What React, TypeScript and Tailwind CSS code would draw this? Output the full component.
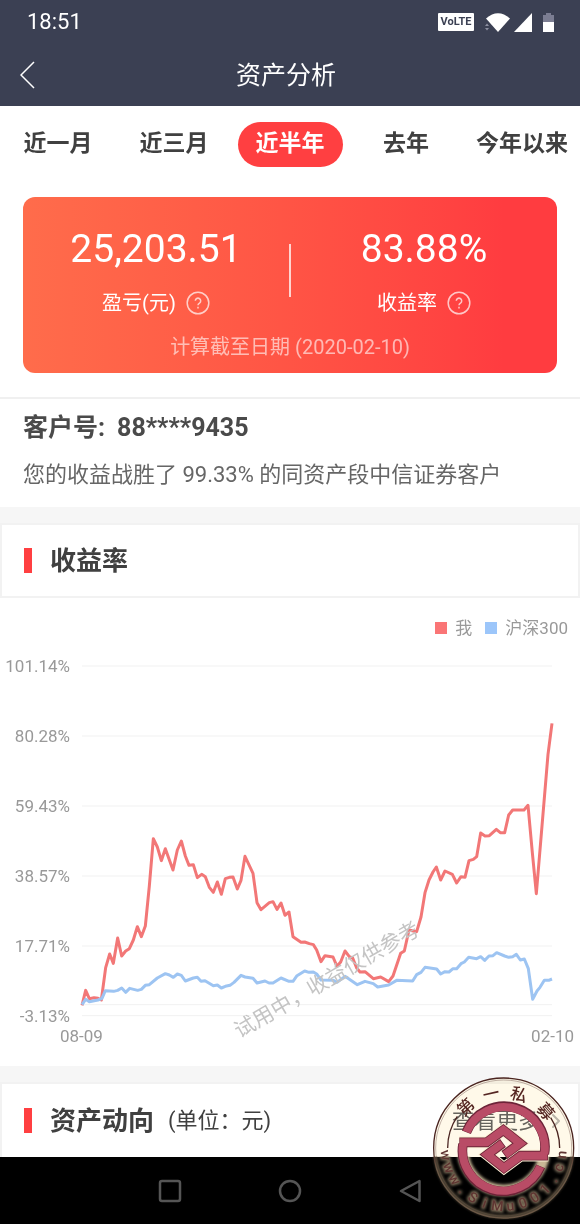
import { ChevronRight } from "lucide-react";

const ranges = ["近一月", "近三月", "近半年", "去年", "今年以来"];

const summary = [
  { value: "25,203.51", label: "盈亏(元)" },
  { value: "83.88%", label: "收益率" },
];

const yLabels = ["101.14%", "80.28%", "59.43%", "38.57%", "17.71%", "-3.13%"];
const gridLines = [0, 210, 420, 630, 840, 1016, 1049];

// --- CHART SERIES (x 36..1446, y grows downwards) ---
const mine =
  "36,918 47,873 58,898 72,895 84,897 94,902 107,805 119,764 130,792 143,716 155,770 167,755 178,748 190,722 202,682 214,712 226,680 238,560 250,418 262,443 274,484 286,448 309,512 322,452 334,425 346,470 357,498 370,496 382,535 395,525 406,532 418,564 430,579 442,548 454,585 466,538 478,534 489,533 502,569 513,543 525,471 549,522 561,610 573,631 598,610 609,607 621,630 633,611 645,648 657,638 669,712 693,729 704,728 718,733 730,736 740,752 753,787 765,769 789,773 801,801 812,788 825,755 838,772 848,776 860,806 870,818 885,817 910,838 932,833 956,847 969,830 992,762 1003,755 1017,692 1040,697 1053,653 1065,580 1077,542 1089,518 1099,503 1112,542 1125,515 1147,525 1160,551 1173,532 1185,534 1197,484 1210,480 1220,472 1232,401 1245,410 1258,409 1279,390 1291,400 1304,400 1316,347 1328,332 1362,332 1374,318 1387,460 1399,583 1434,165 1446,72";
const csi300 =
  "36,916 47,900 58,907 84,902 96,897 106,874 131,876 143,873 155,866 167,879 179,867 203,873 214,870 226,858 238,856 262,836 286,823 298,827 310,834 322,824 334,828 346,845 370,836 382,834 393,846 405,844 430,859 442,857 454,866 466,861 480,858 492,849 513,828 525,833 549,837 561,851 585,845 597,851 609,851 633,836 657,846 669,846 681,829 704,815 717,819 730,818 740,824 753,842 790,843 801,849 825,831 862,856 885,846 910,853 923,863 956,857 980,843 1028,845 1040,826 1053,819 1065,804 1100,809 1112,824 1125,817 1137,818 1149,808 1160,808 1173,793 1183,788 1196,774 1220,778 1232,772 1244,783 1257,770 1269,769 1280,760 1304,770 1316,774 1328,772 1339,765 1351,782 1363,779 1375,808 1388,900 1401,875 1410,864 1423,843 1436,843 1446,839";

const sealTop = [
  { char: "第", angle: -43 },
  { char: "一", angle: -13 },
  { char: "私", angle: 16 },
  { char: "募", angle: 49 },
];
const sealBottom = "www.SiMu001.cn".split("");

function StatusIcons() {
  return (
    <div className="flex items-center">
      <span className="flex h-[18px] w-9 items-center justify-center rounded-[1px] bg-white text-[11px] leading-3 font-bold text-[#3b4053]">
        VoLTE
      </span>
      <svg className="ml-[10px] h-[19px] w-[26px]" viewBox="0 0 26 19" aria-hidden="true">
        <path d="M2 5.500Q14 -5 26 5.500L14 19Z" fill="#fff" />
        <path d="M1 13l2-2.500 2 2.500zM1 15l2 2.500 2-2.500z" fill="#8c8fa0" />
      </svg>
      <svg className="ml-1 h-[19px] w-[18px]" viewBox="0 0 18 19" aria-hidden="true">
        <path d="M18 0V19H0Z" fill="#fff" />
      </svg>
      <svg className="ml-[11px] h-[19px] w-[11px]" viewBox="0 0 11 19" aria-hidden="true">
        <path d="M3 0h5v2h3v7H0V2h3z" fill="#7b7d92" />
        <path d="M0 9h11v10H0z" fill="#fff" />
      </svg>
    </div>
  );
}

function HelpButton({ label }: { label: string }) {
  return (
    <button type="button" aria-label={label} className="h-6 w-6 opacity-70">
      <svg viewBox="0 0 24 24" fill="none" stroke="#fff" strokeWidth="1.500" className="h-6 w-6">
        <circle cx="12" cy="12" r="10.800" />
        <path d="M9.300 9.800a2.700 2.700 0 1 1 4.200 2.300c-1 .6-1.500 1.100-1.500 2.100" />
        <path d="M12 15.800v1.700" />
      </svg>
    </button>
  );
}

function Seal() {
  return (
    <div className="pointer-events-none absolute right-1 bottom-1 h-36 w-36">
      <svg viewBox="36 34 432 432" className="absolute inset-0 h-36 w-36 mix-blend-multiply" aria-hidden="true">
        <circle cx="251" cy="250" r="211" fill="#fff9e9" />
      </svg>
      <svg viewBox="36 34 432 432" className="absolute inset-0 h-36 w-36" aria-hidden="true">
        <defs>
          <filter id="glow" x="-20%" y="-20%" width="140%" height="140%">
            <feGaussianBlur stdDeviation="4" />
          </filter>
          <clipPath id="lower">
            <rect x="36" y="275" width="432" height="191" />
          </clipPath>
          <linearGradient id="rim" x1="0" y1="0" x2="0" y2="1">
            <stop offset="0.5" stopColor="#4a2420" />
            <stop offset="0.65" stopColor="#6b5846" />
          </linearGradient>
        </defs>

        {/* soft halo over the dark bar */}
        <g clipPath="url(#lower)">
          <g fill="none" filter="url(#glow)">
            <circle cx="251" cy="250" r="206" stroke="#75654f" strokeWidth="8" />
            <circle cx="251" cy="255" r="122" stroke="#c9b896" strokeWidth="34" />
          </g>
          <g fill="#8d7c64" stroke="#8d7c64" strokeWidth="8" textAnchor="middle" filter="url(#glow)">
            {sealBottom.map((char, i) => (
              <text key={i} x="251" y="439" fontSize="42" transform={`rotate(${83 - i * 12.8} 251 250)`}>
                {char}
              </text>
            ))}
          </g>
        </g>

        <g fill="none" stroke="url(#rim)">
          <circle cx="251" cy="250" r="210" strokeWidth="4" />
          <circle cx="251" cy="250" r="204" strokeWidth="1" />
        </g>
        <g fill="none" stroke="#4a2420" strokeWidth="4">
          <path d="M83 250A168 168 0 0 1 112 155" />
          <path d="M419 250A168 168 0 0 0 392 159" />
        </g>

        {/* ring and knot */}
        <g fill="none" strokeLinejoin="miter">
          <g stroke="#fbf0d4" strokeWidth="35">
            <path d="M117 233H200L250 196L300 236L253 271" />
            <path d="M385 273H302L252 310L202 270L249 235" />
          </g>
          <g stroke="#6d2438" strokeWidth="29">
            <path d="M139 203A122 122 0 0 1 373 268" />
            <path d="M129 238A122 122 0 0 0 362 305" />
            <path d="M118 233H200L250 196L300 236L253 271" />
            <path d="M384 273H302L252 310L202 270L249 235" />
          </g>
          <g stroke="#b94c66" strokeWidth="24">
            <path d="M140 202A122 122 0 0 1 373 268" />
            <path d="M129 238A122 122 0 0 0 361 306" />
            <path d="M120 233H200L250 196L300 236L255 270" />
            <path d="M382 273H302L252 310L202 270L247 236" />
          </g>
        </g>

        <g fill="#552622" textAnchor="middle">
          {sealTop.map((item) => (
            <text key={item.char} x="251" y="101" fontSize="50" fontWeight="500" transform={`rotate(${item.angle} 251 250)`}>
              {item.char}
            </text>
          ))}
        </g>
        <g fill="#5f3532" textAnchor="middle">
          {sealBottom.map((char, i) => (
            <text key={i} x="251" y="439" fontSize="42" fontWeight="500" transform={`rotate(${83 - i * 12.8} 251 250)`}>
              {char}
            </text>
          ))}
        </g>
      </svg>
    </div>
  );
}

export default function App() {
  return (
    <div
      lang="zh-CN"
      className="relative min-h-screen overflow-hidden bg-white font-['Roboto','Noto_Sans_CJK_SC',sans-serif] text-[#404040]"
    >
      {/* HEADER */}
      <header className="bg-[#3b4053] text-white">
        <div className="flex h-11 items-center justify-between pr-[26px] pl-[27px]">
          <span className="text-[22px] leading-6">18:51</span>
          <StatusIcons />
        </div>
        <div className="grid h-[62px] grid-cols-[1fr_auto_1fr] items-center pr-7 pl-5">
          <button type="button" aria-label="返回" className="w-4">
            <svg viewBox="0 0 16 28" fill="none" stroke="#fff" strokeWidth="1.500" className="h-7 w-4">
              <path d="M14 1L1 14l13 13" />
            </svg>
          </button>
          <h1 className="pt-[2px] text-[25px] leading-8 font-normal">资产分析</h1>
        </div>
      </header>

      {/* RANGE TABS */}
      <nav className="grid grid-cols-5 justify-items-center pt-4">
        {ranges.map((range) => (
          <button
            key={range}
            type="button"
            className={
              range === "近半年"
                ? "h-[45px] w-[105px] rounded-full bg-[#ff3f41] text-[23px] font-bold whitespace-nowrap text-white"
                : "h-[45px] w-[105px] text-[23px] font-bold whitespace-nowrap"
            }
          >
            {range}
          </button>
        ))}
      </nav>

      {/* SUMMARY CARD */}
      <section className="mx-[23px] mt-[30px] rounded-xl bg-linear-to-r from-[#ff6c4b] to-[#ff3c40] to-90% pt-7 pb-[14px] text-white">
        <div className="grid grid-cols-[1fr_2px_1fr]">
          {summary.map((item, i) => (
            <div key={item.label} className={i === 0 ? "order-1 text-center" : "order-3 text-center"}>
              <p className="text-[39px] leading-[48px]">{item.value}</p>
              <div className="mt-[18px] flex items-center justify-center gap-[10px]">
                <span className="text-[20px] leading-6">{item.label}</span>
                <HelpButton label={item.label + "说明"} />
              </div>
            </div>
          ))}
          <span className="order-2 h-[53px] self-center bg-white/75" />
        </div>
        <p className="mt-5 text-center text-[20px] leading-6 text-white/60">计算截至日期 (2020-02-10)</p>
      </section>

      {/* CLIENT */}
      <section className="mt-6 border-t-2 border-[#f0f0f0] px-[23px] pt-[13px] pb-[17px]">
        <p className="flex gap-3 text-[25px] leading-8 font-bold text-[#4a4a4a]">
          <span>客户号:</span>
          <span>88****9435</span>
        </p>
        <p className="mt-4 text-[22px] leading-[30px] whitespace-nowrap text-[#666]">
          您的收益战胜了 99.33% 的同资产段中信证券客户
        </p>
      </section>

      <div className="h-4 bg-[#f6f6f6]" />

      {/* YIELD */}
      <section>
        <div className="flex h-[75px] items-center gap-[18px] border-2 border-[#f2f2f2] px-[22px]">
          <span className="h-[25px] w-2 bg-[#ff3f41]" />
          <h2 className="text-[26px] leading-8 font-bold">收益率</h2>
        </div>

        <div className="flex items-center justify-end pt-5 pr-3 text-[17px] leading-5 text-[#999]">
          <span className="mr-2 h-3 w-3 bg-[#fa7576]" />
          <span className="mr-[13px]">我</span>
          <span className="mr-2 h-3 w-3 bg-[#9cc6fa]" />
          <span>沪深300</span>
        </div>

        <div className="relative mt-[18px] flex gap-3 pr-7">
          <div className="flex h-[370px] w-[70px] shrink-0 flex-col justify-between text-right text-[17px] leading-5 text-[#999]">
            {yLabels.map((label) => (
              <span key={label}>{label}</span>
            ))}
          </div>
          <div className="flex-1 py-[10px]">
            <svg viewBox="36 -100 1410 1050" preserveAspectRatio="none" className="h-[350px] w-full overflow-visible">
              {gridLines.map((y) => (
                <line key={y} x1="36" x2="1446" y1={y - 100} y2={y - 100} stroke="#f1f1f1" vectorEffect="non-scaling-stroke" />
              ))}
              <g fill="none" strokeWidth="3" strokeLinejoin="round">
                <polyline points={mine} stroke="#f27777" vectorEffect="non-scaling-stroke" />
                <polyline points={csi300} stroke="#9dc4f2" vectorEffect="non-scaling-stroke" />
              </g>
            </svg>
          </div>
          {/* watermark */}
          <span className="absolute top-[312px] left-[221px] w-[212px] -rotate-30 text-center text-[21px] leading-6 whitespace-nowrap text-[#c4c4c4]">
            试用中，收益仅供参考
          </span>
        </div>
        <div className="flex justify-between pr-[6px] pb-5 pl-[60px] text-[17px] leading-5 text-[#999]">
          <span>08-09</span>
          <span>02-10</span>
        </div>
      </section>

      <div className="h-4 bg-[#f6f6f6]" />

      {/* ASSET TREND */}
      <section className="flex h-[75px] items-center border-2 border-b-0 border-[#f2f2f2] pr-[10px] pl-[22px]">
        <span className="mr-[18px] h-[25px] w-2 bg-[#ff3f41]" />
        <h2 className="mr-[14px] text-[26px] leading-8 font-bold">资产动向</h2>
        <span className="text-[22px] leading-8">(单位：元)</span>
        <a href="#" className="ml-auto flex items-center gap-1 text-[22px] leading-8 text-[#666]">
          查看更多
          <ChevronRight className="h-6 w-6 text-[#bbb]" strokeWidth={2} />
        </a>
      </section>

      {/* SYSTEM BAR */}
      <footer className="flex h-[67px] items-center justify-center gap-24 bg-black">
        <button type="button" aria-label="最近任务">
          <svg viewBox="0 0 24 24" fill="none" stroke="#555" strokeWidth="2.500" className="h-6 w-6">
            <rect x="2" y="2" width="20" height="20" rx="2" />
          </svg>
        </button>
        <button type="button" aria-label="主屏幕">
          <svg viewBox="0 0 24 24" fill="none" stroke="#555" strokeWidth="2.500" className="h-6 w-6">
            <circle cx="12" cy="12" r="10" />
          </svg>
        </button>
        <button type="button" aria-label="后退">
          <svg viewBox="0 0 24 24" fill="none" stroke="#555" strokeWidth="2.500" strokeLinejoin="round" className="h-6 w-6">
            <path d="M21.500 2v20L3 12z" />
          </svg>
        </button>
      </footer>

      <Seal />
    </div>
  );
}
